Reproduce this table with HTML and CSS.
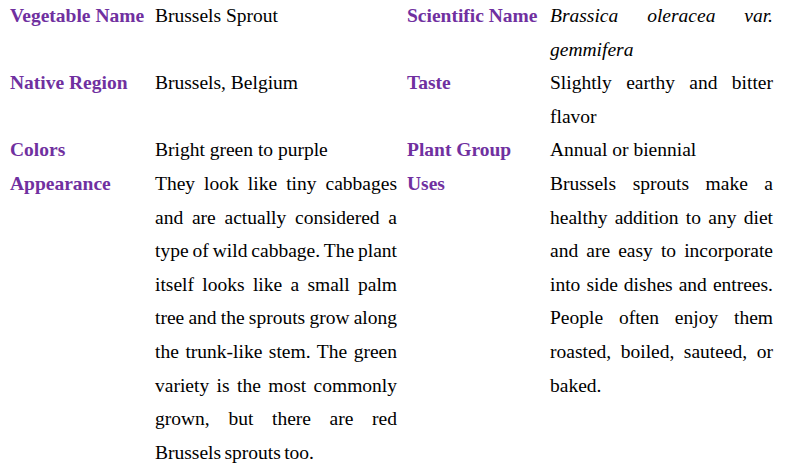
FILE: index.html
```html
<!DOCTYPE html>
<html>
<head>
<meta charset="utf-8">
<link rel="stylesheet" href="styles.css">
</head>
<body>
<div class="facts">
  <div class="label">Vegetable Name</div>
  <div class="value">Brussels Sprout</div>
  <div class="label">Scientific Name</div>
  <div class="value"><em>Brassica oleracea var. gemmifera</em></div>

  <div class="label">Native Region</div>
  <div class="value">Brussels, Belgium</div>
  <div class="label">Taste</div>
  <div class="value">Slightly earthy and bitter flavor</div>

  <div class="label">Colors</div>
  <div class="value">Bright green to purple</div>
  <div class="label">Plant Group</div>
  <div class="value">Annual or biennial</div>

  <div class="label">Appearance</div>
  <div class="value tight">They look like tiny cabbages and are actually considered a type of wild cabbage. The plant itself looks like a small palm tree and the sprouts grow along the trunk-like stem. The green variety is the most commonly grown, but there are red Brussels sprouts too.</div>
  <div class="label">Uses</div>
  <div class="value">Brussels sprouts make a healthy addition to any diet and are easy to incorporate into side dishes and entrees. People often enjoy them roasted, boiled, sauteed, or baked.</div>
</div>
</body>
</html>
```

FILE: styles.css
```css
html, body {
  margin: 0;
  padding: 0;
  background: #ffffff;
}
body {
  font-family: "Liberation Serif", "Times New Roman", serif;
  font-size: 19.5px;
  line-height: 33.6px;
  color: #000000;
}
.facts {
  display: grid;
  grid-template-columns: 135px 242px 133px 223px;
  column-gap: 10px;
  padding-left: 10px;
  margin-top: -1px;
}
.label {
  font-weight: bold;
  color: #7030a0;
  white-space: nowrap;
}
.value {
  text-align: justify;
}
.value.tight {
  word-spacing: -1.5px;
}
.value em {
  font-style: italic;
}
```
